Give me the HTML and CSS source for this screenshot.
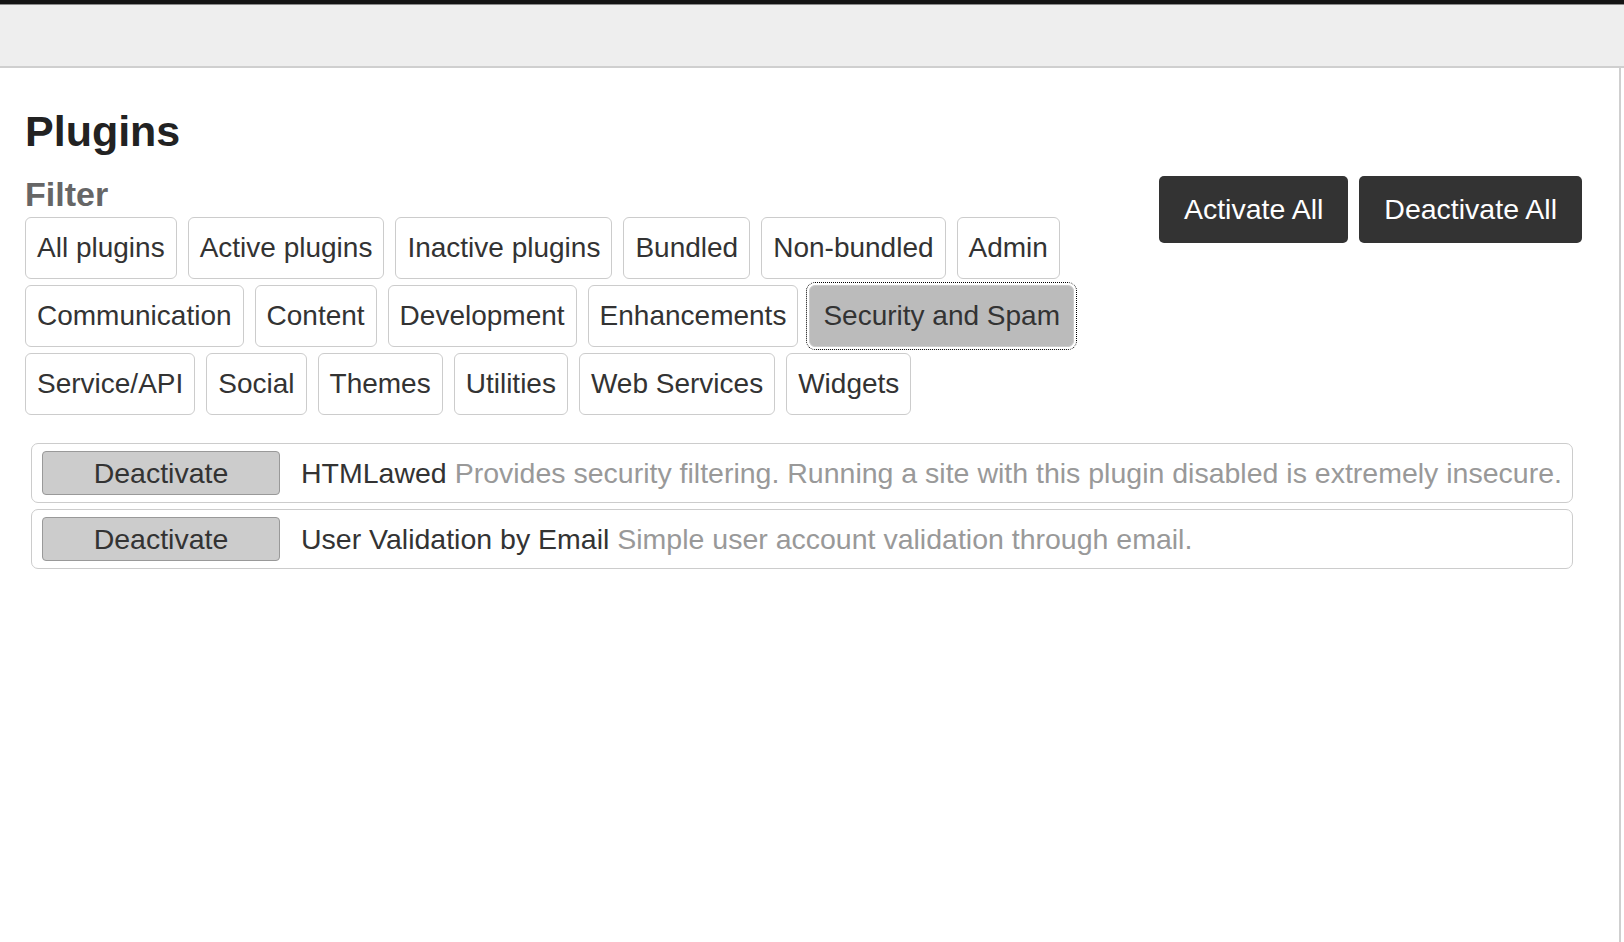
FILE: index.html
```html
<!DOCTYPE html>
<html>
<head>
<meta charset="utf-8">
<title>Plugins</title>
<link rel="stylesheet" href="styles.css">
</head>
<body>
<div class="topbar"></div>
<div class="header"></div>
<main class="content">
  <h1 class="title">Plugins</h1>
  <div class="filter-area">
    <div class="filter">
      <h3 class="filter-title">Filter</h3>
      <div class="filter-buttons">
        <button class="fbtn">All plugins</button>
        <button class="fbtn">Active plugins</button>
        <button class="fbtn">Inactive plugins</button>
        <button class="fbtn">Bundled</button>
        <button class="fbtn">Non-bundled</button>
        <button class="fbtn">Admin</button>
        <button class="fbtn">Communication</button>
        <button class="fbtn">Content</button>
        <button class="fbtn">Development</button>
        <button class="fbtn">Enhancements</button>
        <button class="fbtn fbtn-selected">Security and Spam</button>
        <button class="fbtn">Service/API</button>
        <button class="fbtn">Social</button>
        <button class="fbtn">Themes</button>
        <button class="fbtn">Utilities</button>
        <button class="fbtn">Web Services</button>
        <button class="fbtn">Widgets</button>
      </div>
    </div>
    <div class="bulk">
      <button class="dbtn">Activate All</button>
      <button class="dbtn">Deactivate All</button>
    </div>
  </div>
  <ul class="plugin-list">
    <li class="plugin">
      <button class="gbtn">Deactivate</button>
      <div class="plugin-text"><span class="plugin-name">HTMLawed</span> <span class="plugin-desc">Provides security filtering. Running a site with this plugin disabled is extremely insecure.</span></div>
    </li>
    <li class="plugin">
      <button class="gbtn">Deactivate</button>
      <div class="plugin-text"><span class="plugin-name">User Validation by Email</span> <span class="plugin-desc">Simple user account validation through email.</span></div>
    </li>
  </ul>
</main>
</body>
</html>
```
FILE: styles.css
```css
html, body {
  margin: 0;
  padding: 0;
  background: #ffffff;
  font-family: "Liberation Sans", Arial, sans-serif;
  color: #333333;
}

.topbar {
  height: 4px;
  background: #141414;
  border-bottom: 1px solid #8a8a8a;
}

.header {
  height: 61px;
  background: #eeeeee;
  border-bottom: 2px solid #cfcfcf;
}

.content {
  width: 1621px;
  box-sizing: border-box;
  border-right: 2px solid #cfcfcf;
  min-height: 874px;
  padding: 0 37px 0 25px;
}

.title {
  margin: 0;
  padding-top: 39px;
  font-size: 43px;
  line-height: 48px;
  font-weight: bold;
  color: #222222;
}

.filter-area {
  display: flex;
  align-items: flex-start;
  margin-top: 19px;
}

.filter {
  flex: 1;
  margin-right: 60px;
}

.filter-title {
  margin: 0 0 3px 0;
  font-size: 34px;
  line-height: 40px;
  font-weight: bold;
  color: #666666;
}

.filter-buttons {
  display: flex;
  flex-wrap: wrap;
  column-gap: 11px;
  row-gap: 6px;
}

.fbtn {
  font-family: inherit;
  font-size: 28px;
  line-height: 36px;
  color: #333333;
  background: #ffffff;
  border: 1px solid #cccccc;
  border-radius: 6px;
  padding: 12px 11px;
  margin: 0;
  cursor: pointer;
}

.fbtn-selected {
  background: #bbbbbb;
  padding: 12px 13px;
  outline: 1px dotted #000000;
  outline-offset: 2px;
}

.bulk {
  display: flex;
  gap: 11px;
  margin-top: 2px;
}

.dbtn {
  font-family: inherit;
  font-size: 28.5px;
  line-height: 37px;
  color: #ffffff;
  background: #333333;
  border: none;
  border-radius: 5px;
  padding: 15px 25px;
  margin: 0;
}

.plugin-list {
  list-style: none;
  margin: 28px 9px 0 6px;
  padding: 0;
  display: flex;
  flex-direction: column;
  gap: 6px;
}

.plugin {
  display: flex;
  align-items: center;
  border: 1px solid #cccccc;
  border-radius: 7px;
  padding: 7px 10px 7px 10px;
}

.gbtn {
  font-family: inherit;
  width: 238px;
  height: 44px;
  font-size: 28.5px;
  line-height: 42px;
  color: #333333;
  background: #cccccc;
  border: 1px solid #999999;
  border-radius: 4px;
  padding: 0;
  margin: 0 21px 0 0;
  text-align: center;
}

.plugin-text {
  font-size: 28.5px;
  line-height: 36px;
  white-space: nowrap;
}

.plugin-name {
  color: #333333;
}

.plugin-desc {
  color: #999999;
}
```
